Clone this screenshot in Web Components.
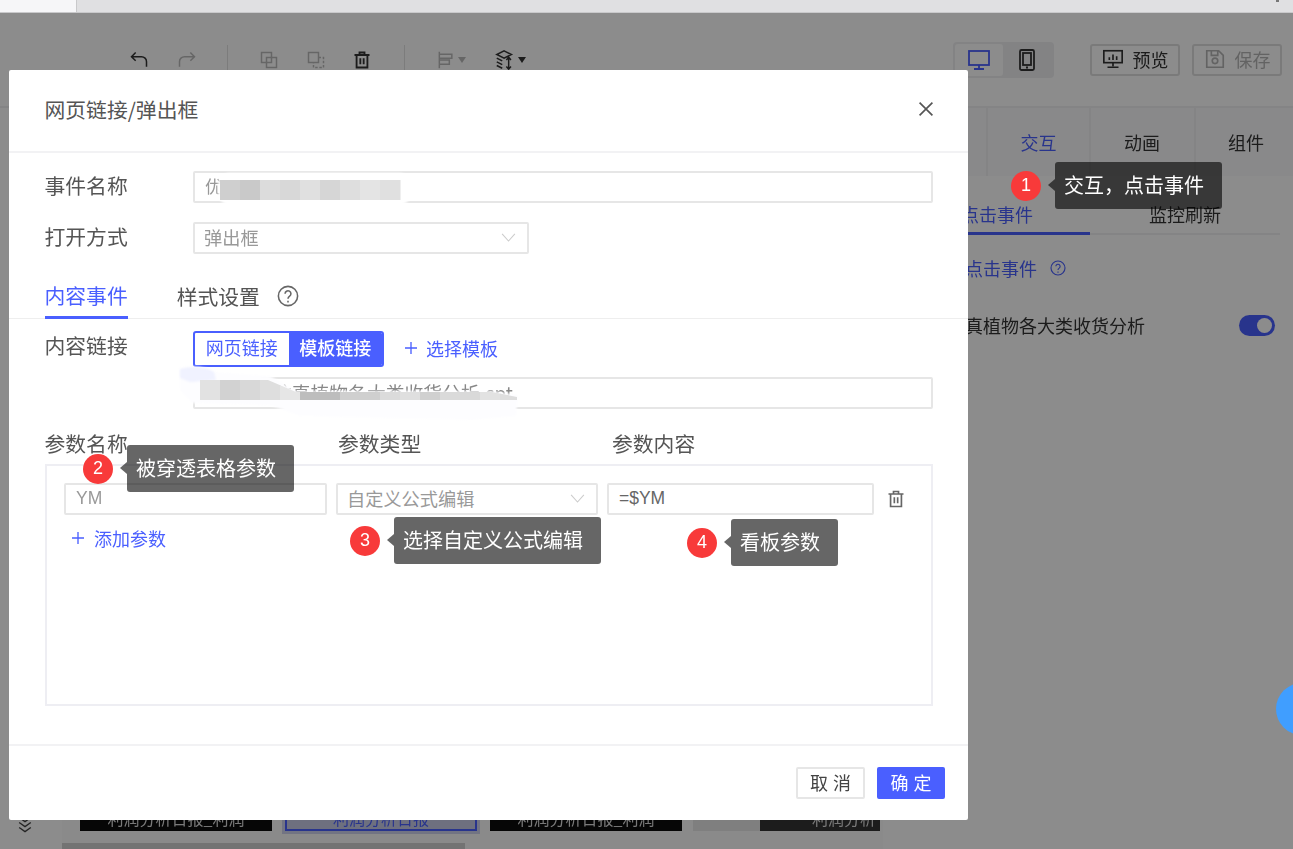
<!DOCTYPE html>
<html lang="zh"><head><meta charset="utf-8"><title>网页链接/弹出框</title>
<style>
html,body{margin:0;padding:0;background:#fff;overflow:hidden}
body{font-family:"Noto Sans CJK SC","Liberation Sans",sans-serif}
</style></head><body>
<app-shell>
  <top-strip></top-strip>
  <editor-toolbar></editor-toolbar>
  <work-area></work-area>
  <modal-mask></modal-mask>
  <float-fab></float-fab>
  <link-dialog></link-dialog>
  <redact-patches></redact-patches>
  <note-callout n="1" style="--x:1011px;--y:162px">交互，点击事件</note-callout>
  <note-callout n="2" style="--x:83px;--y:445px">被穿透表格参数</note-callout>
  <note-callout n="3" style="--x:350px;--y:517px">选择自定义公式编辑</note-callout>
  <note-callout n="4" style="--x:687px;--y:519px">看板参数</note-callout>
</app-shell>
<script>
const FONT='"Noto Sans CJK SC","Liberation Sans",sans-serif';
const ICON={
 undo:'<path d="M8 3 3 8l5 5M3 8h12a6 6 0 0 1 6 6v6"/>',
 redo:'<path d="M16 3l5 5-5 5M21 8H9a6 6 0 0 0-6 6v6"/>',
 copy:'<rect x="3" y="3" width="12" height="12"/><rect x="9" y="9" width="12" height="12"/>',
 paste:'<rect x="3" y="3" width="12" height="12"/><path d="M15 9h6v12H9v-6" stroke-dasharray="3 2"/>',
 trash:'<path d="M3 6h18M9 6V3h6v3M5.500 6v15h13V6M10 10v7M14 10v7"/>',
 align:'<path d="M4 2v20M4 5h15v5H4M4 12h12v5H4"/>',
 layers:'<path d="M11 2l8 4-8 4-8-4zM3 10l6 3M3 14l6 3M3 18l6 3M16 9v13M13.500 12l2.500-3 2.500 3M13.500 19l2.500 3 2.500-3"/>',
 monitor:'<rect x="2" y="3" width="20" height="14"/><path d="M12 17v3M7 21h10"/>',
 tablet:'<rect x="5" y="2" width="14" height="20" rx="1.500"/><rect x="8" y="5" width="8" height="12"/><path d="M11 19.500h2"/>',
 preview:'<rect x="2" y="3" width="20" height="13"/><path d="M12 16v4M6 21h12M8 13V10M12 13V7M16 13V9"/>',
 save:'<path d="M3 3h13l5 5v13H3zM8 3v5h7V3"/><circle cx="12" cy="14" r="3"/>',
 close:'<path d="M5 5l14 14M19 5 5 19"/>',
 chev:'<path d="M3 7l9 10 9-10"/>',
 plus:'<path d="M12 3v18M3 12h18"/>',
 down2:'<path d="M5 3l7 5 7-5M5 9l7 5 7-5M5 15l7 5 7-5"/>'
};
const svg=(n,s,c,w=1.8,extra='')=>`<svg width="${s}" height="${s}" viewBox="0 0 24 24" fill="none" stroke="${c}" stroke-width="${w}" ${extra}>${ICON[n]}</svg>`;
const help=(s,c)=>`<svg width="${s}" height="${s}" viewBox="0 0 24 24" fill="none" stroke="${c}" stroke-width="1.700"><circle cx="12" cy="12" r="10.500"/><path d="M8.800 9.500a3.200 3.200 0 1 1 5 2.700c-1.200.8-1.800 1.400-1.800 2.800"/><path d="M12 17.200v1.800"/></svg>`;
class Base extends HTMLElement{
  connectedCallback(){ if(this.shadowRoot) return; this.attachShadow({mode:'open'}).innerHTML=this.render(); }
}
const def=(n,r)=>customElements.define(n,class extends Base{render(){return r.call(this)}});

def('app-shell',()=>`<style>:host{display:flex;flex-direction:column;position:relative;width:1293px;height:849px;overflow:hidden;background:#fff;color:#333;font-family:${FONT}}</style><slot></slot>`);

def('top-strip',()=>`<style>:host{display:flex;flex:none;height:13px;box-sizing:border-box;background:#e0e0e2;border-bottom:1px solid #c9c9cb;position:relative}
.tab{width:76px;background:#f6f6f8;border-right:1px solid #c9c9cb}
.mark{margin-left:auto;margin-right:14px;width:3px;height:2px;background:#777}</style><div class="tab"></div><div class="mark"></div>`);

def('editor-toolbar',()=>`<style>
:host{display:flex;flex:none;height:95px;box-sizing:border-box;align-items:center;border-bottom:2px solid #f0f0f2;padding-left:129px;padding-right:11px;background:#fff;filter:blur(.4px)}
.i{display:flex;width:20px;height:20px;margin-right:28px;align-items:center}
.sep{width:1px;height:30px;background:#e2e2e2;margin:0 31px 0 2px}
.drop{display:flex;align-items:center;gap:2px;width:40px;margin-right:18px}
.car{width:0;height:0;border:4.500px solid transparent;border-top:6px solid #333;border-bottom:0}
.car.off{border-top-color:#bbb}
.right{margin-left:auto;display:flex;align-items:center}
.dev{display:flex;width:101px;height:36px;box-sizing:border-box;padding:2px;background:#efeff1;border-radius:4px;margin-right:24px}
.dev div{display:flex;align-items:center;justify-content:center;width:48px;border-radius:3px}
.dev .on{background:#fff}
.btn{display:flex;align-items:center;justify-content:center;gap:9px;width:90px;height:32px;box-sizing:border-box;border:2px solid #dedede;border-radius:3px;font-size:18px;line-height:1;margin-left:12px;padding-bottom:1px}
.btn.off{color:#b5b5b5}
</style>
<div class="i">${svg('undo',20,'#333')}</div>
<div class="i" style="margin-right:10px">${svg('redo',20,'#bbb')}</div>
<div class="sep" style="margin-left:20px"></div>
<div class="i" style="margin-right:27px">${svg('copy',20,'#bbb')}</div>
<div class="i" style="margin-right:26px">${svg('paste',20,'#bbb')}</div>
<div class="i" style="margin-right:12px">${svg('trash',20,'#333',2.200)}</div>
<div class="sep" style="margin-left:20px"></div>
<div class="drop">${svg('align',20,'#bbb')}<span class="car off"></span></div>
<div class="drop">${svg('layers',22,'#333',1.600)}<span class="car"></span></div>
<div class="right">
 <div class="dev"><div class="on">${svg('monitor',24,'#4a5fff')}</div><div>${svg('tablet',24,'#333')}</div></div>
 <div class="btn">${svg('preview',22,'#333')}<span>预览</span></div>
 <div class="btn off">${svg('save',22,'#b5b5b5')}<span>保存</span></div>
</div>`);

def('work-area',()=>`<style>:host{display:flex;flex:1;min-height:0}</style><canvas-pane style="flex:1"></canvas-pane><side-panel></side-panel>`);

def('canvas-pane',()=>`<style>
:host{display:flex;align-items:flex-end;min-width:0;background:#fff;filter:blur(.4px)}
.rail{width:50px;margin-right:12px;height:100%;display:flex;flex-direction:column;justify-content:flex-end;align-items:center;padding-bottom:14px;box-sizing:border-box}
.strip{flex:1;display:flex;flex-direction:column;background:#fbfbfc}
.thumbs{display:flex;gap:13px;padding:0 0 12px 18px;margin-top:14px}
.t{width:192px;height:26px;box-sizing:border-box;background:#0c0c0c;color:#ddd;font-size:16px;line-height:16px;display:flex;align-items:flex-end;justify-content:center;padding-bottom:5px;white-space:nowrap;overflow:hidden}
.t.sel{box-shadow:inset 0 0 0 2px #4a5fff,0 0 0 3px #cfd3ee;background:#c9cde8;color:#4a5fff}
.t.last{width:187px;background:linear-gradient(90deg,#e8e8e8 0 67px,#333 67px);justify-content:flex-end;padding-right:4px;margin-left:-2px}
.bar{height:6px;width:403px;background:#d2d2d2}
</style>
<div class="rail">${svg('down2',20,'#444',1.600)}</div>
<div class="strip"><div class="thumbs"><div class="t">利润分析日报_利润</div><div class="t sel">利润分析日报</div><div class="t">利润分析日报_利润</div><div class="t last">利润分析</div></div><div class="bar"></div></div>`);

def('side-panel',()=>`<style>
:host{display:block;flex:none;width:410px;box-sizing:border-box;background:#fff;filter:blur(.4px);font-size:18px;color:#333}
.tabs{display:flex;height:68px;box-sizing:border-box;background:#fff}
.tabs div{display:flex;align-items:center;justify-content:center;box-sizing:border-box;border-left:2px solid #f0f0f2;background:#fafafc}
.sub{display:flex;margin:21px 13px 0 17px;border-bottom:2px solid #f1f1f3;height:38px;box-sizing:border-box;line-height:34px;text-align:center}
.sub div{width:190px;box-sizing:border-box;height:38px}
.sub .on{color:#4a5fff;border-bottom:3px solid #4a5fff;padding-left:4px}
.row{display:flex;align-items:center;margin-left:82px;line-height:24px}
.ev{margin-top:21px;color:#4a5fff;gap:13px}
.sw{justify-content:space-between;margin-top:33px;margin-right:18px;color:#333}
.tg{width:36px;height:21px;border-radius:11px;background:#4a5fff;position:relative}
.tg i{position:absolute;right:3px;top:3px;width:15px;height:15px;border-radius:50%;background:#fff}
</style>
<div class="tabs"><div style="width:103px;border-left:0">属性</div><div style="width:103px;color:#4a5fff">交互</div><div style="width:105px;padding-right:1px">动画</div><div style="width:99px;padding-left:3px">组件</div></div>
<div class="sub"><div class="on">点击事件</div><div>监控刷新</div></div>
<div class="row ev"><span>点击事件</span>${help(16,'#4a5fff')}</div>
<div class="row sw"><span>真植物各大类收货分析</span><span class="tg"><i></i></span></div>`);

def('modal-mask',()=>`<style>:host{display:block;position:absolute;left:0;right:0;top:13px;bottom:0;background:rgba(0,0,0,.45)}</style>`);
def('float-fab',()=>`<style>:host{display:block;position:absolute;left:1276px;top:683px;width:52px;height:52px;border-radius:50%;background:#409eff}</style>`);

def('ui-input',function(){const dark=this.hasAttribute('dark');return `<style>:host{display:flex;align-items:center;height:32px;box-sizing:border-box;border:2px solid #e6e6e6;border-radius:2px;padding:0 10px 1px;font-size:17.500px;color:${dark?'#666':'#999'};background:#fff;white-space:nowrap;overflow:hidden;font-family:"Liberation Sans","Noto Sans CJK SC",sans-serif}</style><slot></slot>`});

def('ui-select',function(){return `<style>:host{display:flex;align-items:center;justify-content:space-between;height:32px;box-sizing:border-box;border:2px solid #e6e6e6;border-radius:2px;padding:0 10px 3px 9px;font-size:18.200px;color:#999;background:#fff;white-space:nowrap}svg{margin-top:2px}</style><slot></slot>${svg('chev',17,'#ccc',1.500)}`});

def('link-dialog',()=>`<style>
:host{display:flex;flex-direction:column;position:absolute;left:9px;top:70px;width:959px;height:750px;background:#fff;border-radius:2px;color:#555;font-size:20.800px;filter:blur(.3px)}
.hd{flex:none;height:83px;box-sizing:border-box;border-bottom:2px solid #f2f2f4;display:flex;align-items:center;justify-content:space-between;padding:0 31px 4px 35.500px}
.body{flex:1;min-height:0;display:flex;flex-direction:column}
.f{display:grid;grid-template-columns:148.500px 1fr;margin:0 35px 0 35.500px;line-height:28px}
.tabs{display:flex;gap:49px;margin-top:22px;padding-left:35.500px;height:43px;box-sizing:border-box;border-bottom:1px solid #eee;line-height:38px}
.tabs div{height:43px;box-sizing:border-box}
.tabs .on{color:#4a5fff;border-bottom:3px solid #4a5fff}
.tabs .h{display:flex;align-items:center;gap:17px;height:40px}
.seg{display:flex;width:191px;height:36px;box-sizing:border-box;border:2px solid #4a5fff;border-radius:3px;font-size:18px;line-height:28px;overflow:hidden;text-align:center}
.seg span{flex:1;color:#4a5fff}
.seg .on{background:#4a5fff;color:#fff;font-weight:500}
.add{display:flex;align-items:center;gap:7px;color:#4a5fff;font-size:18px;line-height:28px}
.top{padding-bottom:3px}
.h3{display:grid;grid-template-columns:293.500px 274px 1fr;margin:21px 35px 8px 35.500px;line-height:26px}
.box{height:242px;box-sizing:border-box;border:2px solid #eeeef3;margin:0 35px 0 36px;padding:17px 0 0 17px}
.r{display:grid;grid-template-columns:263px 262px 267px auto;gap:9px;align-items:center}
.del{margin-left:3px;display:flex}
.add2{margin:9px 0 0 6px;line-height:28px;gap:8px}
.ft{flex:none;height:76px;box-sizing:border-box;border-top:2px solid #f2f2f4;display:flex;justify-content:flex-end;gap:12px;padding:21px 23px 0 0}
.b{height:32px;box-sizing:border-box;border-radius:2px;font-size:18px;letter-spacing:5px;line-height:26px;text-align:center;padding-left:5px}
.b.c{width:69px;border:2px solid #e6e6e6;color:#444}
.b.o{width:68px;border:2px solid #4a5fff;background:#4a5fff;color:#fff}
</style>
<div class="hd"><span>网页链接/弹出框</span>${svg('close',22,'#555',1.800)}</div>
<div class="body">
 <div class="f" style="margin-top:18px"><span>事件名称</span><ui-input>优</ui-input></div>
 <div class="f" style="margin-top:19px"><span>打开方式</span><ui-select style="width:336px">弹出框</ui-select></div>
 <div class="tabs"><div class="on">内容事件</div><div class="h"><span>样式设置</span>${help(22,'#666')}</div></div>
 <div class="f" style="margin-top:12px"><span>内容链接</span><div style="display:flex;align-items:center;gap:19px"><div class="seg"><span>网页链接</span><span class="on">模板链接</span></div><div class="add top">${svg('plus',16,'#4a5fff',2)}<span>选择模板</span></div></div></div>
 <div class="f" style="margin-top:10px"><span></span><ui-input style="padding-left:78px;font-family:'Noto Sans CJK SC',sans-serif;color:#888;font-size:18.800px">纹真植物各大类收货分析.cpt</ui-input></div>
 <div class="h3"><span>参数名称</span><span>参数类型</span><span>参数内容</span></div>
 <div class="box">
  <div class="r"><ui-input>YM</ui-input><ui-select>自定义公式编辑</ui-select><ui-input dark>=$YM</ui-input><span class="del">${svg('trash',20,'#666',2)}</span></div>
  <div class="add add2">${svg('plus',16,'#4a5fff',2)}<span>添加参数</span></div>
 </div>
</div>
<div class="ft"><div class="b c">取消</div><div class="b o">确定</div></div>`);

def('redact-patches',()=>{
 const tiles=(x0,y,h,w,cols)=>cols.map((c,i)=>`<rect x="${x0+i*w}" y="${y}" width="${w+.5}" height="${h}" fill="${c}"/>`).join('');
 return `<style>:host{position:absolute;left:0;top:0;width:1293px;height:849px;pointer-events:none}svg{display:block}</style>
 <svg width="1293" height="849" viewBox="0 0 1293 849">
 <defs><filter id="b"><feGaussianBlur stdDeviation="1"/></filter>
 <clipPath id="c"><path d="M200 380H268L296 392H492L517 397V400H200Z"/></clipPath></defs>
 <rect x="218" y="173" width="193" height="32" rx="12" fill="#fff" filter="url(#b)"/>
 ${tiles(220,180,20,20,['#cfcfcf','#c9c9c9','#dcdcdc','#d8d8d8','#e0e0e0','#d6d6d6','#dedede','#e4e4e4','#e0e0e0'])}
 <path d="M180 369C190 366 205 366 214 372L270 376 296 391H492L518 395 516 416 470 420 300 416 270 405 192 403 180 390Z" fill="#fdfdff" filter="url(#b)"/>
 <path d="M180 369C190 366 205 366 214 372L216 380 190 382 180 378Z" fill="#f0f2ff" filter="url(#b)"/>
 <g clip-path="url(#c)">${tiles(200,380,20,20,['#e2e2e2','#d2d2d2','#d8d8d8','#dedede','#e6e6e6','#bdbdbd','#bdbdbd','#cfcfcf','#cfcfcf','#dbdbdb','#dfdfdf','#d0d0d0','#dadada','#d9d9d9','#e2e2e2','#dedede'])}</g>
 </svg>`;
});

def('note-callout',function(){return `<style>
:host{position:absolute;left:var(--x);top:var(--y);display:flex;align-items:center;height:47px;font-size:20px;color:#fff}
.n{flex:none;width:30px;height:30px;box-sizing:border-box;padding-bottom:2px;border-radius:50%;background:#f83a3a;display:flex;align-items:center;justify-content:center;font:18px/1 "Liberation Sans",sans-serif;margin-right:14px}
.t{position:relative;height:47px;line-height:45px;box-sizing:border-box;padding:0 18px 0 9px;background:rgba(0,0,0,.6);border-radius:3px;white-space:nowrap}
.t::before{content:"";position:absolute;left:-7px;top:17px;border:6.500px solid transparent;border-left:0;border-right:7px solid rgba(0,0,0,.6)}
</style><span class="n">${this.getAttribute('n')}</span><div class="t"><slot></slot></div>`});
</script>
</body></html>
